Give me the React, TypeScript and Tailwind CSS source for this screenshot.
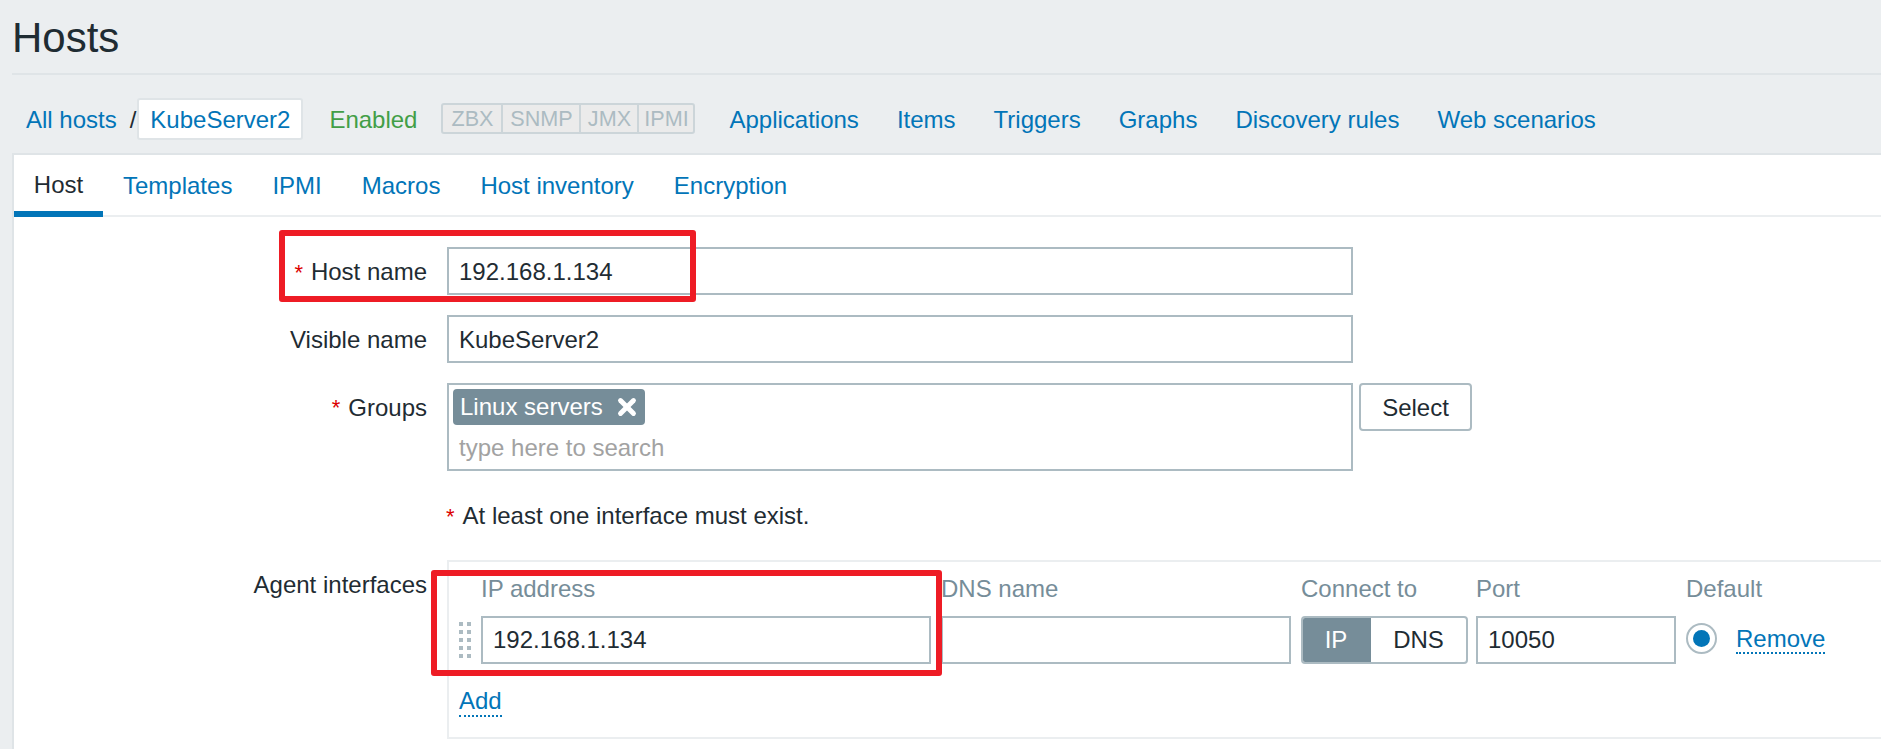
import { X } from "lucide-react";

const navLinks = ["Applications", "Items", "Triggers", "Graphs", "Discovery rules", "Web scenarios"];
const tabs = ["Templates", "IPMI", "Macros", "Host inventory", "Encryption"];
const statusBadges = [
  { label: "ZBX", width: "w-[58px]" },
  { label: "SNMP", width: "w-[78px]" },
  { label: "JMX", width: "w-[58px]" },
  { label: "IPMI", width: "w-[56px]" },
];

function Asterisk() {
  return <span className="text-[#dc0000] text-[22px] mr-[8px]">*</span>;
}

function FormRow({ label, required, value }: { label: string; required?: boolean; value: string }) {
  return (
    <div className="flex items-center">
      <div className="w-[413px] pt-[2px] text-right">
        {required && <Asterisk />}
        {label}
      </div>
      <div className="ml-[20px] w-[906px] h-[48px] border-2 border-[#acbbc2] pl-[10px] pt-[2px] flex items-center">{value}</div>
    </div>
  );
}

function GripHandle() {
  return (
    <div className="grid grid-cols-2 gap-x-[4px] gap-y-[4px] w-[12px]">
      {Array.from({ length: 10 }).map((_, i) => (
        <div key={i} className="w-[4px] h-[4px] bg-[#acbbc2]" />
      ))}
    </div>
  );
}

export default function App() {
  return (
    <div className="relative w-[1881px] h-[749px] overflow-hidden bg-[#ebeef0] text-[24px] leading-[28px] text-[#1f2c33] font-['Liberation_Sans',Arial,sans-serif]">
      {/* TITLE */}
      <div className="ml-[12px] h-[75px] border-b-2 border-[#dfe4e7] flex items-center pt-[2px]">
        <h1 className="text-[42px] leading-[48px] font-normal">Hosts</h1>
      </div>

      {/* HOST NAV */}
      <div className="h-[78px] pt-[23px] pl-[26px] flex items-start">
        <div className="h-[42px] pt-[2px] flex items-center text-[#0275b8] shrink-0">All hosts</div>
        <div className="h-[42px] pt-[2px] ml-[13px] mr-[1px] flex items-center shrink-0">/</div>
        <div className="h-[42px] w-[166px] shrink-0 pt-[2px] bg-white border-2 border-[#dfe4e7] rounded-[3px] flex items-center justify-center text-[#0275b8]">
          KubeServer2
        </div>
        <div className="h-[42px] pt-[2px] ml-[26px] flex items-center text-[#429e47]">Enabled</div>
        <div className="ml-[24px] mt-[5px] h-[31px] flex border-2 border-[#ccd5d9] rounded-[3px] bg-[#ebebeb] text-[21.6px] text-[#acbbc2]">
          {statusBadges.map((badge, i) => (
            <div
              key={badge.label}
              className={`${badge.width} flex items-center justify-center ${i > 0 ? "border-l-2 border-[#ccd5d9]" : ""}`}
            >
              {badge.label}
            </div>
          ))}
        </div>
        <div className="ml-[34px] h-[42px] pt-[2px] flex items-center gap-[38px] text-[#0275b8]">
          {navLinks.map((link) => (
            <span key={link}>{link}</span>
          ))}
        </div>
      </div>

      {/* PANEL */}
      <div className="ml-[12px] h-[596px] bg-white border-t-2 border-l-2 border-[#dfe4e7]">
        <div className="h-[62px] flex border-b-2 border-[#ebeef0]">
          <div className="h-[62px] w-[89px] pt-[3px] border-b-[6px] border-[#0275b8] flex items-center justify-center">Host</div>
          <div className="flex">
            {tabs.map((tab) => (
              <div key={tab} className="px-[20px] h-[60px] pt-[2px] flex items-center text-[#0275b8]">
                {tab}
              </div>
            ))}
          </div>
        </div>

        <div className="pt-[30px] flex flex-col gap-[20px]">
          <FormRow label="Host name" required value="192.168.1.134" />
          <FormRow label="Visible name" value="KubeServer2" />

          <div className="flex items-start">
            <div className="w-[413px] h-[48px] pt-[2px] flex items-center justify-end">
              <Asterisk />
              Groups
            </div>
            <div className="ml-[20px] w-[906px] h-[88px] border-2 border-[#acbbc2] pl-[4px] pt-[4px]">
              <div className="w-[192px] h-[36px] bg-[#768d99] rounded-[4px] text-white pl-[7px] flex items-center">
                Linux servers
                <X size={26} strokeWidth={4.5} className="ml-[11px]" />
              </div>
              <div className="pl-[6px] mt-[9px] text-[#a2a2a2]">type here to search</div>
            </div>
            <div className="ml-[6px] w-[113px] h-[48px] pt-[2px] border-2 border-[#acbbc2] rounded-[4px] flex items-center justify-center">Select</div>
          </div>
        </div>

        <div className="ml-[432px] mt-[31px]">
          <Asterisk />
          At least one interface must exist.
        </div>

        {/* AGENT INTERFACES */}
        <div className="flex items-start mt-[29px]">
          <div className="w-[413px] shrink-0 pt-[11px] text-right">Agent interfaces</div>
          <div className="ml-[20px] w-[1500px] shrink-0 h-[179px] border-2 border-[#ebeef0] pl-[10px] pt-[12px]">
            <div className="grid grid-cols-[12px_450px_350px_165px_200px_200px] gap-x-[10px] gap-y-[13px] items-center">
              <div />
              <div className="pt-[1px] text-[#768d99]">IP address</div>
              <div className="pt-[1px] text-[#768d99]">DNS name</div>
              <div className="pt-[1px] text-[#768d99]">Connect to</div>
              <div className="pt-[1px] text-[#768d99]">Port</div>
              <div className="pt-[1px] text-[#768d99]">Default</div>

              <GripHandle />
              <div className="h-[48px] border-2 border-[#acbbc2] pl-[10px] flex items-center">192.168.1.134</div>
              <div className="h-[48px] border-2 border-[#acbbc2]" />
              <div className="w-[167px] h-[48px] flex border-2 border-[#acbbc2] rounded-[4px] overflow-hidden">
                <div className="w-[70px] -m-[2px] mr-0 bg-[#768d99] text-white flex items-center justify-center">IP</div>
                <div className="flex-1 flex items-center justify-center">DNS</div>
              </div>
              <div className="h-[48px] border-2 border-[#acbbc2] pl-[10px] flex items-center">10050</div>
              <div className="flex items-center">
                <div className="w-[31px] h-[31px] mb-[3px] rounded-full border-2 border-[#acbbc2] flex items-center justify-center">
                  <div className="w-[17px] h-[17px] rounded-full bg-[#0275b8]" />
                </div>
                <span className="ml-[19px] text-[#0275b8] border-b-2 border-dotted border-[#0275b8] leading-[26px]">Remove</span>
              </div>
            </div>
            <div className="mt-[23px] ml-0">
              <span className="inline-block text-[#0275b8] border-b-2 border-dotted border-[#0275b8] leading-[28px]">Add</span>
            </div>
          </div>
        </div>
      </div>

      {/* RED ANNOTATIONS */}
      <div className="absolute left-[279px] top-[230px] w-[417px] h-[72px] border-[6px] border-[#ee1c25] rounded-[3px]" />
      <div className="absolute left-[431px] top-[570px] w-[511px] h-[106px] border-[6px] border-[#ee1c25] rounded-[3px]" />
    </div>
  );
}
